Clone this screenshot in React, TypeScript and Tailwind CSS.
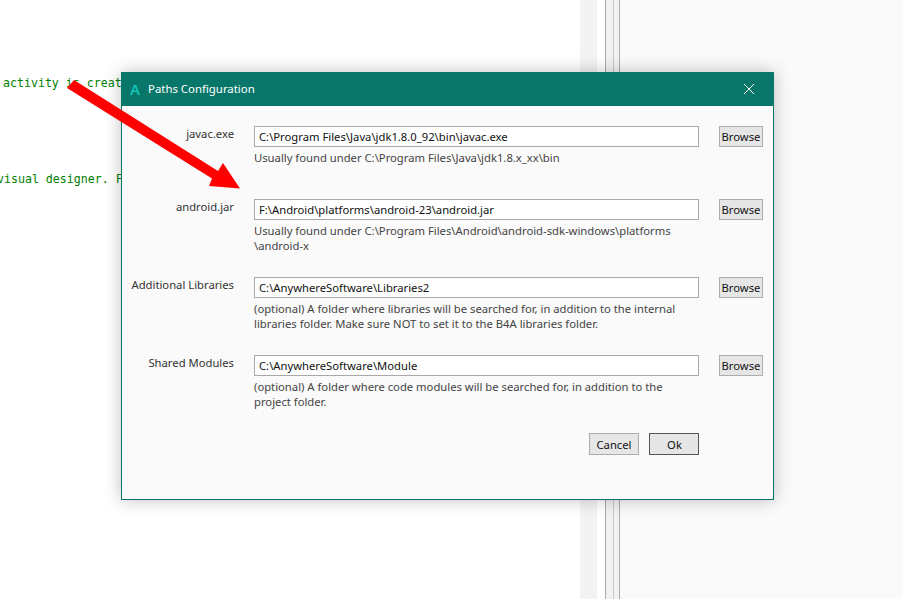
const font = "font-['Noto_Sans','Open_Sans',sans-serif]";

const rows = [
  {
    label: "javac.exe",
    value: "C:\\Program Files\\Java\\jdk1.8.0_92\\bin\\javac.exe",
    hint: ["Usually found under C:\\Program Files\\Java\\jdk1.8.x_xx\\bin"],
    height: "h-[73px]",
  },
  {
    label: "android.jar",
    value: "F:\\Android\\platforms\\android-23\\android.jar",
    hint: ["Usually found under C:\\Program Files\\Android\\android-sdk-windows\\platforms", "\\android-x"],
    height: "h-[78px]",
  },
  {
    label: "Additional Libraries",
    value: "C:\\AnywhereSoftware\\Libraries2",
    hint: [
      "(optional) A folder where libraries will be searched for, in addition to the internal",
      "libraries folder. Make sure NOT to set it to the B4A libraries folder.",
    ],
    height: "h-[78px]",
  },
  {
    label: "Shared Modules",
    value: "C:\\AnywhereSoftware\\Module",
    hint: ["(optional) A folder where code modules will be searched for, in addition to the", "project folder."],
    height: "h-[78px]",
  },
];

function PathRow({ row }: { row: (typeof rows)[number] }) {
  return (
    <div className={`flex ${row.height}`}>
      <div className="w-[112px] text-right text-[11.25px] leading-4 text-[#333]">{row.label}</div>
      <div className="ml-[20px] w-[445px]">
        <div className="flex h-[21px] items-center border border-[#a9a9a9] bg-white pt-px pl-[4px] text-[11.25px] text-[#111]">
          {row.value}
        </div>
        <div className="mt-[3px] text-[11.25px] leading-[15px] text-[#444]">
          {row.hint.map((line) => (
            <div key={line} className="whitespace-nowrap">
              {line}
            </div>
          ))}
        </div>
      </div>
      <button className="ml-[20px] h-[21px] w-[44px] border border-[#adadad] bg-[#e6e6e6] pt-px text-[11.25px] text-[#111]">
        Browse
      </button>
    </div>
  );
}

export default function App() {
  return (
    <div className={`relative flex h-[599px] w-[903px] overflow-hidden bg-white ${font}`}>
      {/* Editor behind the dialog */}
      <div className="w-[580px] overflow-hidden pt-[75px] font-['DejaVu_Sans_Mono',monospace] text-[11.6px] leading-4 whitespace-nowrap text-[#008000]">
        <div className="pl-[3px]">activity is created</div>
        <div className="h-20" />
        <div className="-ml-[3px]">visual designer. For</div>
      </div>
      <div className="w-[17px] bg-[#f3f3f3]" />
      <div className="w-[8px] bg-white" />
      <div className="w-[15px] border-x border-x-[#aaa] bg-[#f2f2f2]">
        <div className="ml-[7px] h-full w-px bg-[#c8c8c8]" />
      </div>
      <div className="flex-1 bg-[#fafafa]" />

      {/* Dialog */}
      <div className="absolute top-[72px] left-[121px] h-[428px] w-[653px] border border-[#08776a] bg-[#fafafa] shadow-[0_0_16px_rgba(0,0,0,0.25)]">
        <div className="-mx-px -mt-px flex h-[34px] items-center bg-[#08776a] pr-[19px] pl-[9px] text-white">
          <span className="w-[18px] text-[15px] font-semibold text-[#14c4b2]">A</span>
          <span className="text-[11.4px]">Paths Configuration</span>
          <svg className="ml-auto" width="12" height="12" viewBox="0 0 12 12" fill="none" stroke="white" strokeWidth="1">
            <path d="M1 1l10 10M11 1L1 11" />
          </svg>
        </div>
        <div className="pt-[20px]">
          {rows.map((row) => (
            <PathRow key={row.label} row={row} />
          ))}
          <div className="ml-[467px] flex gap-[10px]">
            <button className="h-[22px] w-[50px] border border-[#adadad] bg-[#e6e6e6] pt-[2px] text-[11.25px] text-[#111]">
              Cancel
            </button>
            <button className="h-[22px] w-[50px] border border-[#555] bg-[#e6e6e6] pt-[2px] pl-px text-[11.25px] text-[#111]">
              Ok
            </button>
          </div>
        </div>
      </div>

      {/* Red arrow annotation */}
      <svg className="absolute top-0 left-0" width="903" height="599" fill="#ff0000">
        <polygon points="74,80 218,171 223,163 240,188.5 209,186 212,178.5 67,88" />
      </svg>
    </div>
  );
}
